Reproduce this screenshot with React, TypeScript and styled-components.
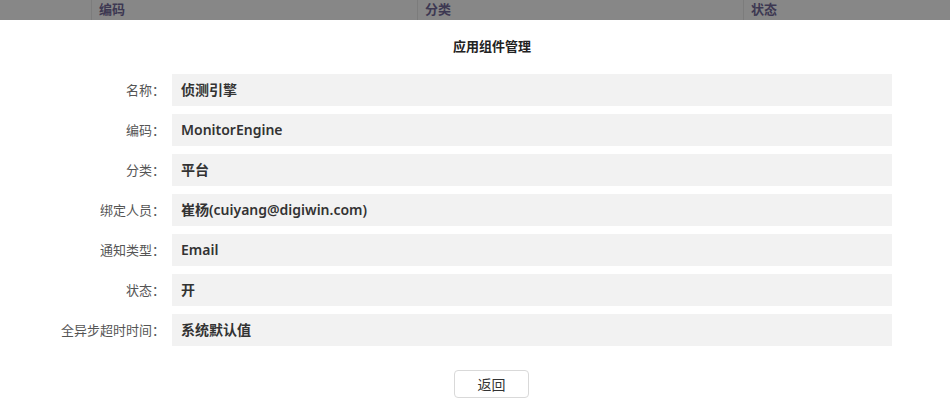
import React from "react";
import styled, { createGlobalStyle } from "styled-components";

const Global = createGlobalStyle`
  html, body { margin: 0; padding: 0; background: #fff; }
  body { font-family: "Noto Sans", "Noto Sans CJK SC", sans-serif; }
`;

const Page = styled.div`
  width: 950px;
  height: 414px;
  overflow: hidden;
  background: #fff;
`;

const HeaderBar = styled.div`
  height: 20px;
  background: #878787;
  display: grid;
  grid-template-columns: 91px 326px 326px 1fr;
  overflow: hidden;
`;

const HeaderCell = styled.div<{ $divider?: boolean }>`
  border-left: ${(p) => (p.$divider ? "1px solid #7c7c7c" : "none")};
  padding-left: 7px;
  font-family: "Noto Sans CJK SC", sans-serif;
  font-weight: 700;
  font-size: 13px;
  line-height: 17px;
  color: #3d3852;
`;

const Title = styled.h1`
  margin: 17px 0 0;
  padding-left: 34px;
  text-align: center;
  font-family: "Noto Sans CJK SC", sans-serif;
  font-size: 13px;
  font-weight: 700;
  line-height: 18px;
  color: #222;
`;

const Form = styled.div`
  margin-top: 19px;
  display: grid;
  grid-template-columns: 172px 720px;
  row-gap: 8px;
`;

const Label = styled.div`
  padding-right: 7px;
  text-align: right;
  font-family: "Noto Sans CJK SC", sans-serif;
  font-size: 13px;
  line-height: 32px;
  color: #555;
`;

const Value = styled.div`
  height: 32px;
  background: #f2f2f2;
  padding-left: 9px;
  font-family: "Noto Sans", "Noto Sans CJK SC", sans-serif;
  font-size: 14px;
  font-weight: 600;
  line-height: 32px;
  color: #333;
`;

const Footer = styled.div`
  margin-top: 24px;
  display: flex;
  justify-content: center;
  padding-left: 33px;
`;

const Button = styled.button`
  width: 75px;
  height: 28px;
  border: 1px solid #d9d9d9;
  border-radius: 4px;
  background: #fff;
  font-family: "Noto Sans CJK SC", sans-serif;
  font-size: 14px;
  color: #333;
  padding: 0;
  cursor: pointer;
`;

const rows: [string, string][] = [
  ["名称", "侦测引擎"],
  ["编码", "MonitorEngine"],
  ["分类", "平台"],
  ["绑定人员", "崔杨(cuiyang@digiwin.com)"],
  ["通知类型", "Email"],
  ["状态", "开"],
  ["全异步超时时间", "系统默认值"],
];

export default function App() {
  return (
    <Page>
      <Global />
      <HeaderBar>
        <HeaderCell />
        <HeaderCell $divider>编码</HeaderCell>
        <HeaderCell $divider>分类</HeaderCell>
        <HeaderCell $divider>状态</HeaderCell>
      </HeaderBar>
      <Title>应用组件管理</Title>
      <Form>
        {rows.map(([l, v]) => (
          <React.Fragment key={l}>
            <Label>{l}：</Label>
            <Value>{v}</Value>
          </React.Fragment>
        ))}
      </Form>
      <Footer>
        <Button>返回</Button>
      </Footer>
    </Page>
  );
}
